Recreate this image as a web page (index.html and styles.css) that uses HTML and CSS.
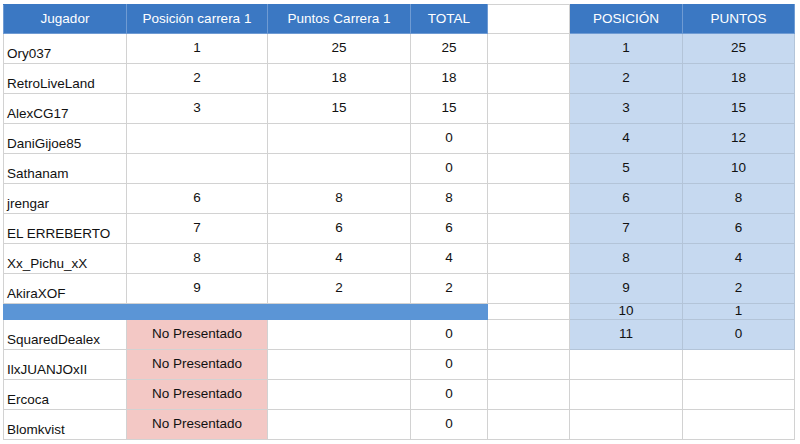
FILE: index.html
```html
<!DOCTYPE html>
<html lang="es">
<head>
<meta charset="utf-8">
<title>Clasificación</title>
<link rel="stylesheet" href="styles.css">
</head>
<body>
<table class="grid">
  <colgroup>
    <col class="c-name"><col class="c-pos"><col class="c-pts"><col class="c-tot"><col class="c-gap"><col class="c-rpos"><col class="c-rpts">
  </colgroup>
  <thead>
    <tr class="head">
      <th>Jugador</th><th>Posición carrera 1</th><th>Puntos Carrera 1</th><th>TOTAL</th><th class="blank"></th><th>POSICIÓN</th><th>PUNTOS</th>
    </tr>
  </thead>
  <tbody>
    <tr><td class="name">Ory037</td><td>1</td><td>25</td><td>25</td><td class="blank"></td><td class="lb">1</td><td class="lb">25</td></tr>
    <tr><td class="name">RetroLiveLand</td><td>2</td><td>18</td><td>18</td><td class="blank"></td><td class="lb">2</td><td class="lb">18</td></tr>
    <tr><td class="name">AlexCG17</td><td>3</td><td>15</td><td>15</td><td class="blank"></td><td class="lb">3</td><td class="lb">15</td></tr>
    <tr><td class="name">DaniGijoe85</td><td></td><td></td><td>0</td><td class="blank"></td><td class="lb">4</td><td class="lb">12</td></tr>
    <tr><td class="name">Sathanam</td><td></td><td></td><td>0</td><td class="blank"></td><td class="lb">5</td><td class="lb">10</td></tr>
    <tr><td class="name">jrengar</td><td>6</td><td>8</td><td>8</td><td class="blank"></td><td class="lb">6</td><td class="lb">8</td></tr>
    <tr><td class="name">EL ERREBERTO</td><td>7</td><td>6</td><td>6</td><td class="blank"></td><td class="lb">7</td><td class="lb">6</td></tr>
    <tr><td class="name">Xx_Pichu_xX</td><td>8</td><td>4</td><td>4</td><td class="blank"></td><td class="lb">8</td><td class="lb">4</td></tr>
    <tr><td class="name">AkiraXOF</td><td>9</td><td>2</td><td>2</td><td class="blank"></td><td class="lb">9</td><td class="lb">2</td></tr>
    <tr class="sep"><td class="bar" colspan="4"></td><td class="blank"></td><td class="lb">10</td><td class="lb">1</td></tr>
    <tr><td class="name">SquaredDealex</td><td class="np">No Presentado</td><td></td><td>0</td><td class="blank"></td><td class="lb">11</td><td class="lb">0</td></tr>
    <tr><td class="name">IlxJUANJOxII</td><td class="np">No Presentado</td><td></td><td>0</td><td class="blank"></td><td></td><td></td></tr>
    <tr><td class="name">Ercoca</td><td class="np">No Presentado</td><td></td><td>0</td><td class="blank"></td><td></td><td></td></tr>
    <tr><td class="name">Blomkvist</td><td class="np">No Presentado</td><td></td><td>0</td><td class="blank"></td><td></td><td></td></tr>
  </tbody>
</table>
</body>
</html>
```
FILE: styles.css
```css
html, body {
  margin: 0;
  background: #ffffff;
}
body {
  padding: 4px 0 0 3px;
  font-family: "Liberation Sans", Arial, sans-serif;
  font-size: 13.5px;
  color: #111111;
}
.grid {
  border-collapse: collapse;
  table-layout: fixed;
  width: 791px;
}
.c-name { width: 123px; }
.c-pos { width: 141px; }
.c-pts { width: 143px; }
.c-tot { width: 77px; }
.c-gap { width: 82px; }
.c-rpos { width: 113px; }
.c-rpts { width: 112px; }

.grid tr { height: 30px; }
.grid tr.head { height: 29px; }
.grid tr.sep { height: 15px; }

.grid th, .grid td {
  border: 1px solid #d2d2d2;
  padding: 0;
  text-align: center;
  vertical-align: middle;
  line-height: 14px;
  white-space: nowrap;
  overflow: hidden;
}
.head th {
  background: #3b78c3;
  color: #ffffff;
  font-weight: normal;
  font-size: 13.5px;
  border-color: #6f9bd3;
  border-top-color: #3b78c3;
}
.head th.blank {
  background: #ffffff;
  border-color: #d2d2d2;
}
.grid td {
  padding-bottom: 1px;
}
.grid td.name {
  text-align: left;
  vertical-align: bottom;
  padding: 0 0 2px 3px;
}
.grid td.bar {
  background: #5b95d6;
  border-color: #5b95d6;
}
.grid td.lb {
  background: #c6d9f0;
  border-color: #b3c4d8;
}
.grid td.np {
  background: #f3c8c5;
}
```
